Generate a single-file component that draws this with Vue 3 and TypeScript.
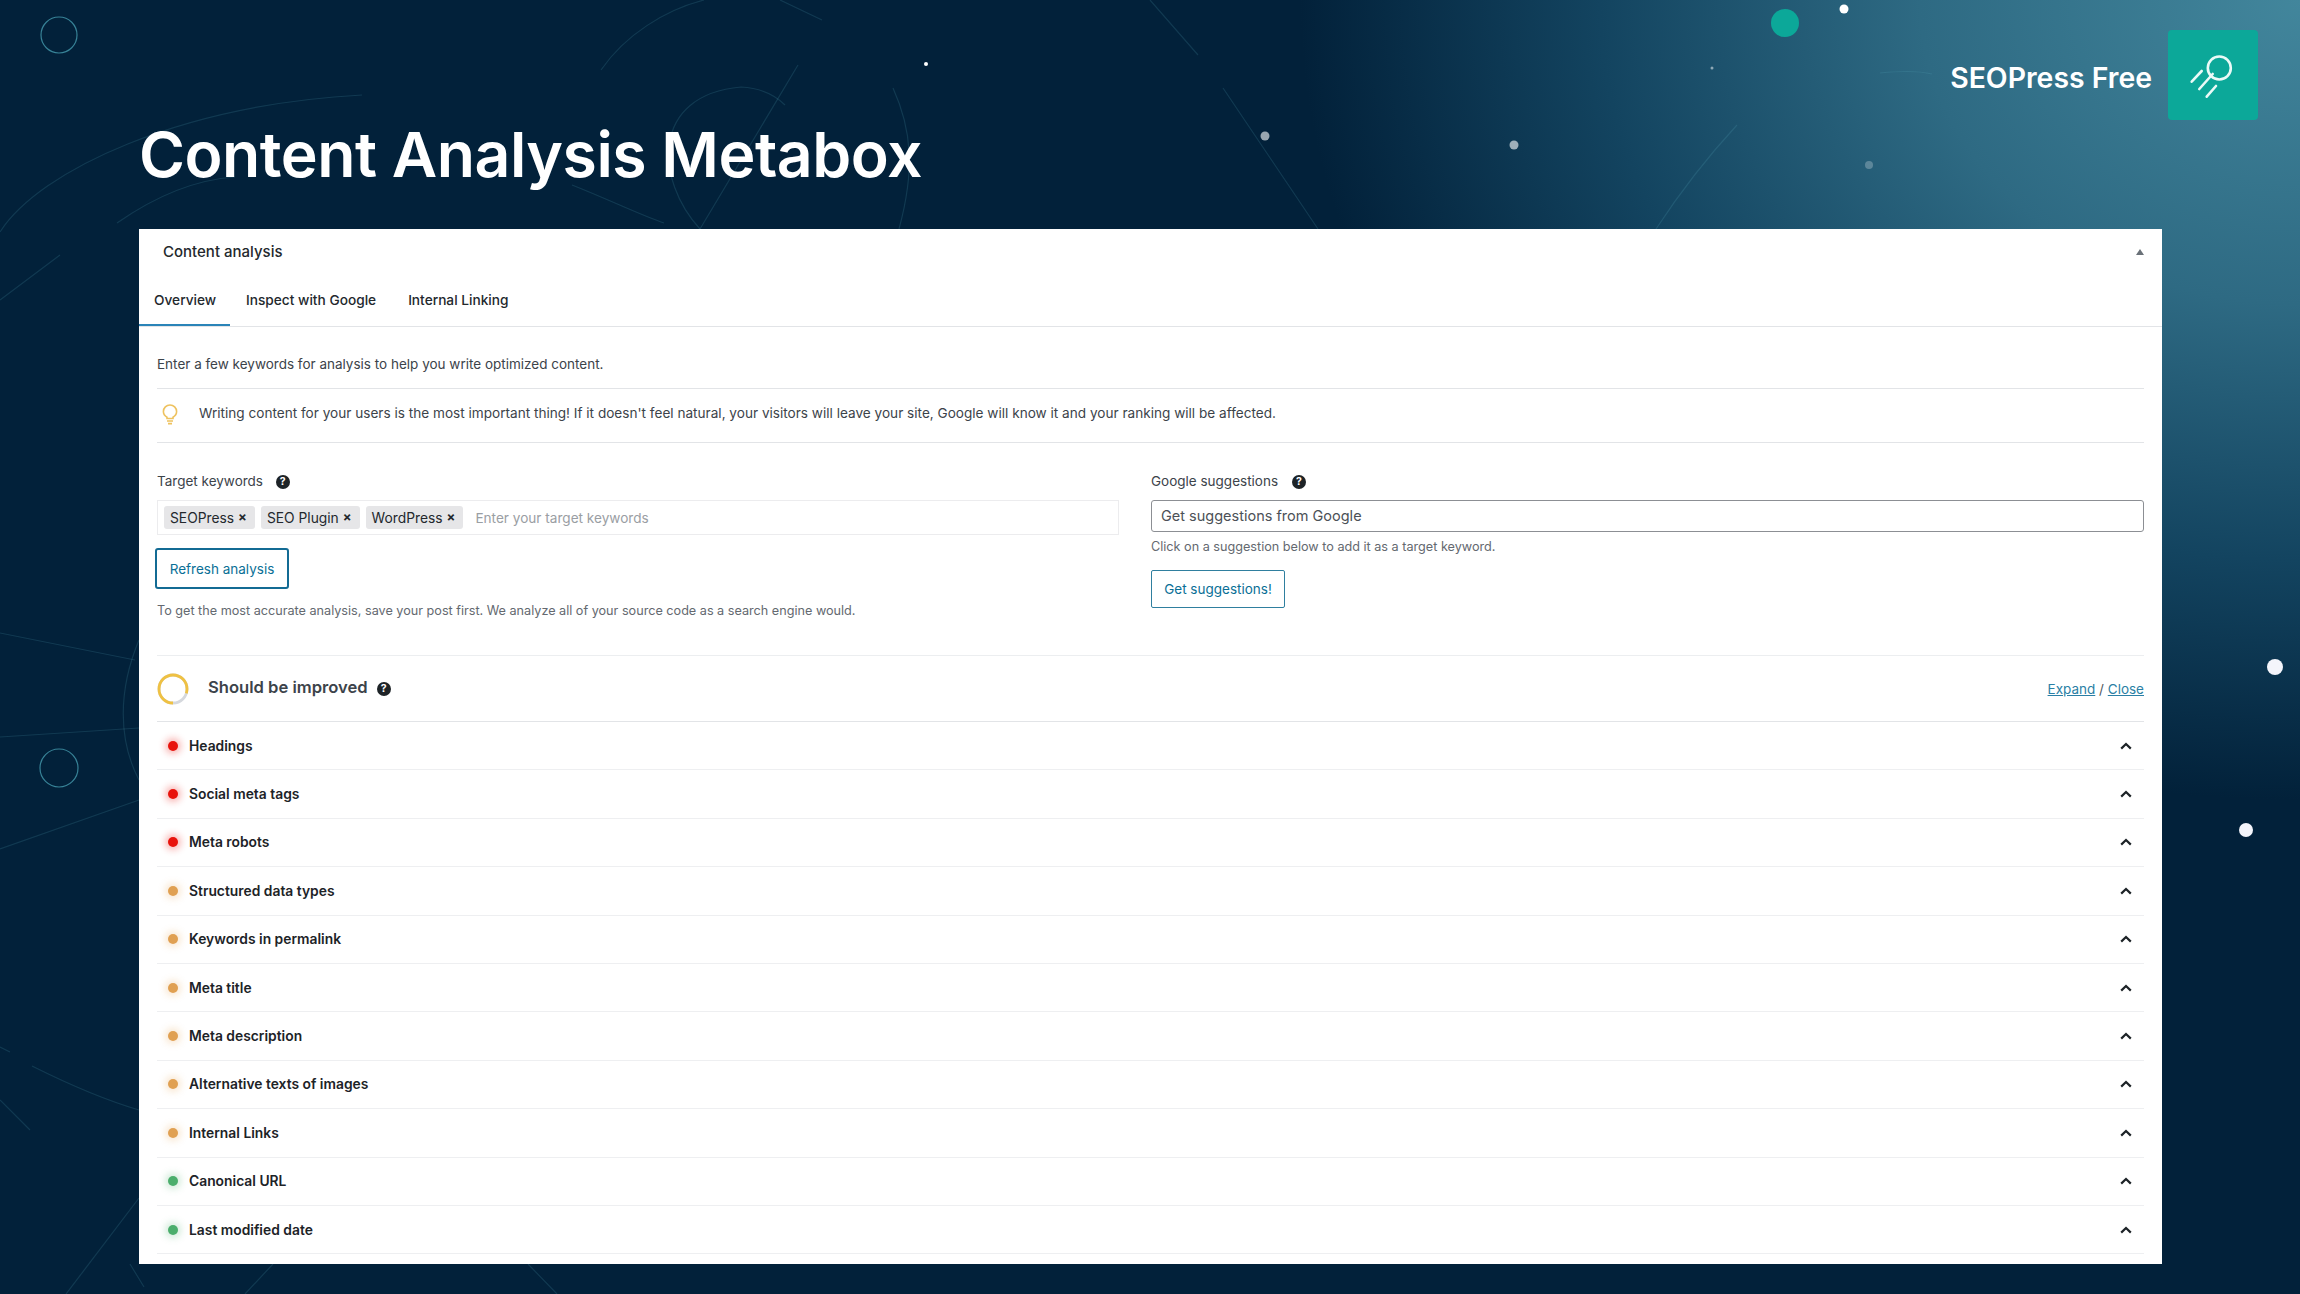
<script setup lang="ts">
type Status = 'bad' | 'warn' | 'good'
interface Row { label: string; status: Status }
const rows: Row[] = [
  { label: 'Headings', status: 'bad' },
  { label: 'Social meta tags', status: 'bad' },
  { label: 'Meta robots', status: 'bad' },
  { label: 'Structured data types', status: 'warn' },
  { label: 'Keywords in permalink', status: 'warn' },
  { label: 'Meta title', status: 'warn' },
  { label: 'Meta description', status: 'warn' },
  { label: 'Alternative texts of images', status: 'warn' },
  { label: 'Internal Links', status: 'warn' },
  { label: 'Canonical URL', status: 'good' },
  { label: 'Last modified date', status: 'good' }
]
const tags: string[] = ['SEOPress', 'SEO Plugin', 'WordPress']
</script>

<template>
  <div class="page">
    <svg class="deco" width="2300" height="1294" viewBox="0 0 2300 1294" fill="none">
      <g stroke="#5fb3c4" stroke-opacity="0.17" stroke-width="1.2">
        <path d="M0 232C40 170 180 105 362 95" />
        <path d="M117 223C150 200 190 180 235 177" />
        <path d="M572 185C610 200 640 215 664 223" />
        <path d="M601 70C625 35 665 10 704 0" />
        <path d="M780 0L822 20" />
        <path d="M700 229C655 180 650 95 741 87C760 88 775 95 785 105" />
        <path d="M798 65L700 229" />
        <path d="M893 88C912 130 915 170 899 229" />
        <path d="M1150 0L1198 55M1223 88L1318 229" />
        <path d="M1737 125C1700 165 1675 200 1656 229" />
        <path d="M1880 73C1900 71 1920 71 1932 74" />
        <path d="M0 633L135 660" />
        <path d="M0 737L139 728" />
        <path d="M0 849L139 800" />
        <path d="M139 640C118 690 118 740 139 780" />
        <path d="M0 1047L10 1052M32 1066C70 1085 105 1100 139 1110" />
        <path d="M66 1294L139 1198" />
        <path d="M0 300L60 255M0 1100L30 1130" />
        <path d="M273 1264L245 1294M528 1264L557 1294M130 1264L144 1287" />
      </g>
      <circle cx="59" cy="35" r="18" stroke="#4aa3b5" stroke-opacity="0.75" stroke-width="1.2" />
      <circle cx="59" cy="768" r="19" stroke="#4aa3b5" stroke-opacity="0.75" stroke-width="1.2" />
      <circle cx="1785" cy="23" r="14" fill="#0ca899" />
      <circle cx="1844" cy="9" r="4.5" fill="#fff" />
      <circle cx="1265" cy="136" r="4.5" fill="#fff" fill-opacity="0.6" />
      <circle cx="1514" cy="145" r="4.5" fill="#fff" fill-opacity="0.6" />
      <circle cx="1869" cy="165" r="4" fill="#fff" fill-opacity="0.25" />
      <circle cx="1712" cy="68" r="1.5" fill="#fff" fill-opacity="0.5" />
      <circle cx="926" cy="64" r="2" fill="#fff" />
      <circle cx="2275" cy="667" r="8" fill="#f4f5fb" />
      <circle cx="2246" cy="830" r="7" fill="#f4f5fb" />
    </svg>

    <header class="top">
      <h1 class="title">Content Analysis Metabox</h1>
      <div class="brand">
        <span class="brand-name">SEOPress Free</span>
        <span class="logo">
          <svg width="90" height="90" viewBox="0 0 90 90" fill="none" stroke="#eafaf7" stroke-width="2.6" stroke-linecap="round">
            <circle cx="51.3" cy="38" r="11.5" />
            <path d="M23.7 51.7L33.7 41M31.3 59L44.7 44M38.7 66.7L48 56" />
          </svg>
        </span>
      </div>
    </header>

    <main class="panel">
      <div class="panel-head">
        <span class="panel-title">Content analysis</span>
        <span class="collapse"></span>
      </div>
      <nav class="tabs">
        <a class="tab active">Overview</a>
        <a class="tab">Inspect with Google</a>
        <a class="tab">Internal Linking</a>
      </nav>

      <div class="body">
        <p class="intro">Enter a few keywords for analysis to help you write optimized content.</p>
        <div class="tip">
          <svg class="bulb" width="16" height="22" viewBox="0 0 16 22" fill="none" stroke="#eec25f" stroke-width="1.6">
            <path d="M5 13.2C2.8 12 1.4 10 1.4 7.6A6.6 6.6 0 0 1 14.6 7.6C14.6 10 13.2 12 11 13.2V14.5H5Z" />
            <path d="M5 17H11M6 19.6H10" />
          </svg>
          <span>Writing content for your users is the most important thing! If it doesn't feel natural, your visitors will leave your site, Google will know it and your ranking will be affected.</span>
        </div>

        <div class="cols">
          <section class="col">
            <div class="label">Target keywords <span class="help">?</span></div>
            <div class="tagbox">
              <span v-for="t in tags" :key="t" class="tag">{{ t }} <b class="x">×</b></span>
              <span class="placeholder">Enter your target keywords</span>
            </div>
            <button class="btn focus">Refresh analysis</button>
            <p class="hint hint-left">To get the most accurate analysis, save your post first. We analyze all of your source code as a search engine would.</p>
          </section>
          <section class="col">
            <div class="label">Google suggestions <span class="help help-right">?</span></div>
            <div class="input">Get suggestions from Google</div>
            <p class="hint hint-right">Click on a suggestion below to add it as a target keyword.</p>
            <button class="btn plain">Get suggestions!</button>
          </section>
        </div>

        <div class="score">
          <svg class="ring" width="32" height="32" viewBox="0 0 32 32" fill="none" stroke-width="2.8">
            <circle cx="16" cy="16" r="14" stroke="#d5d8dd" />
            <circle cx="16" cy="16" r="14" stroke="#efc143" stroke-dasharray="70 88" transform="rotate(90 16 16)" />
          </svg>
          <span class="score-text">Should be improved</span>
          <span class="help help-score">?</span>
          <span class="links"><a>Expand</a> / <a>Close</a></span>
        </div>

        <ul class="rows">
          <li v-for="r in rows" :key="r.label" class="row">
            <span class="dot" :class="r.status"></span>
            <span class="row-label">{{ r.label }}</span>
            <svg class="chev" width="12" height="8" viewBox="0 0 12 8" fill="none" stroke="#1d2327" stroke-width="2.2">
              <path d="M1.2 6.6L6 2L10.8 6.6" />
            </svg>
          </li>
        </ul>
      </div>
    </main>
  </div>
</template>

<style>
html, body { margin: 0; padding: 0; background: #02213a; }
</style>

<style scoped>
.page {
  position: relative;
  width: 2300px;
  height: 1294px;
  overflow: hidden;
  font-family: Inter, "Liberation Sans", sans-serif;
  color: #3c434a;
  background:
    radial-gradient(ellipse 1000px 800px at 100% 0, #42869c 0%, #2e6a83 38%, #134460 70%, rgba(2, 33, 58, 0) 100%),
    #02213a;
}
.deco { position: absolute; left: 0; top: 0; }
.top {
  position: relative;
  height: 229px;
  display: flex;
  justify-content: space-between;
  padding: 0 42px 0 139px;
}
.title {
  margin: 0;
  align-self: flex-end;
  padding-bottom: 39px;
  font-size: 62.5px;
  line-height: 72px;
  font-weight: 600;
  color: #fff;
  letter-spacing: -0.5px;
}
.brand { display: flex; align-items: center; gap: 16px; align-self: flex-start; margin-top: 30px; }
.brand-name { margin-top: 4px; font-size: 28.4px; font-weight: 600; color: #fff; }
.logo { display: block; width: 90px; height: 90px; background: #0ca899; border-radius: 4px; }
.logo svg { display: block; }
.panel {
  position: relative;
  margin: 0 138px 0 139px;
  height: 1035px;
  background: #fff;
}
.panel-head {
  height: 45px;
  padding: 0 18px 1px 24px;
  display: flex;
  align-items: center;
  justify-content: space-between;
}
.panel-title { font-size: 15px; font-weight: 500; color: #23282d; }
.collapse {
  width: 0; height: 0;
  border-left: 4.5px solid transparent;
  border-right: 4.5px solid transparent;
  border-bottom: 6px solid #6a7178;
}
.tabs {
  display: flex;
  height: 51px;
  border-bottom: 1px solid #e2e4e7;
}
.tab {
  display: flex;
  align-items: center;
  height: 49px;
  padding: 0 16px;
  font-size: 13.7px;
  font-weight: 500;
  color: #23282d;
}
.tab.active {
  box-shadow: inset 0 -2px 0 #2a84b8;
  height: 51px;
  width: 91px;
  padding: 0 0 2px 15px;
  box-sizing: border-box;
}
.body { padding: 0 18px; }
.intro {
  margin: 0;
  height: 34px;
  padding-top: 27px;
  line-height: 20px;
  font-size: 13.5px;
  border-bottom: 1px solid #e2e4e7;
}
.tip {
  display: flex;
  align-items: center;
  height: 48px;
  padding: 0 0 5px 5px;
  border-bottom: 1px solid #e2e4e7;
  font-size: 13.6px;
}
.bulb { margin: 3px 21px 0 0; }
.cols { display: grid; grid-template-columns: 962px 993px; gap: 32px; height: 212px; border-bottom: 1px solid #eceef0; }
.col { min-width: 0; padding-top: 26px; }
.label { font-size: 13.5px; height: 31px; line-height: 24px; }
.help {
  display: inline-block;
  width: 14px; height: 14px;
  margin-left: 9px;
  border-radius: 50%;
  background: #1d2327;
  color: #fff;
  font-size: 10.5px;
  line-height: 14px;
  font-weight: 700;
  text-align: center;
  vertical-align: 1px;
}
.help-right { margin-left: 10px; }
.tagbox {
  display: flex;
  align-items: center;
  gap: 6px;
  height: 35px;
  padding-left: 6px;
  border: 1px solid #ececee;
  box-sizing: border-box;
}
.tag {
  display: flex;
  align-items: center;
  gap: 4px;
  height: 23px;
  padding: 0 8px 0 6px;
  background: #e6e6e8;
  border-radius: 3px;
  font-size: 13.8px;
  color: #23282d;
}
.x { font-size: 13px; font-weight: 700; line-height: 1; }
.placeholder { margin-left: 6px; font-size: 13.6px; color: #9a9ea3; }
.btn {
  display: block;
  background: #fff;
  font-family: inherit;
  font-size: 13.5px;
  color: #0a6f96;
  padding: 0;
  cursor: pointer;
}
.focus {
  width: 134px; height: 41px;
  margin: 13px 0 0 -2px;
  border: 2px solid #136b94;
  border-radius: 3px;
}
.plain {
  width: 134px; height: 38px;
  border: 1px solid #2f7f9f;
  border-radius: 2px;
}
.hint { margin: 0; font-size: 12.65px; color: #646970; }
.hint-left { margin-top: 13px; line-height: 17px; }
.input {
  height: 32px;
  line-height: 30px;
  box-sizing: border-box;
  padding-left: 9px;
  border: 1px solid #8c8f94;
  border-radius: 3px;
  font-size: 14.5px;
  color: #4c5157;
}
.hint-right { margin: 6px 0 15px; line-height: 17px; }
.score {
  display: flex;
  align-items: center;
  height: 65px;
  border-bottom: 1px solid #e2e4e7;
}
.ring { margin-right: -1px; }
.score-text { margin: 0 0 3px 20px; font-size: 16.6px; font-weight: 600; color: #3c434a; }
.help-score { margin-left: 9px; }
.links { margin-left: auto; font-size: 13.5px; color: #50575e; }
.links a { color: #2a7fa5; text-decoration: underline; }
.rows { margin: 0; padding: 0; list-style: none; }
.row {
  display: flex;
  align-items: center;
  height: 48.4px;
  box-sizing: border-box;
  border-bottom: 1px solid #eeeff1;
}
.dot {
  width: 10px; height: 10px;
  margin-left: 11px;
  border-radius: 50%;
}
.dot.bad { background: #e8130c; box-shadow: 0 0 7px 3px rgba(232, 19, 12, 0.3); }
.dot.warn { background: #e0a052; box-shadow: 0 0 7px 3px rgba(230, 162, 79, 0.25); }
.dot.good { background: #4bae6c; box-shadow: 0 0 7px 3px rgba(75, 174, 108, 0.25); }
.row-label { margin-left: 11px; font-size: 13.85px; font-weight: 600; color: #1d2327; }
.chev { margin-left: auto; margin-right: 12px; }
</style>
